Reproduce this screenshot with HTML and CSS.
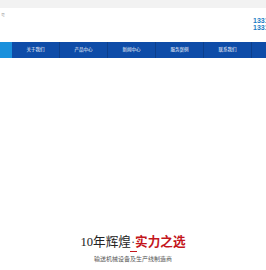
FILE: index.html
```html
<!DOCTYPE html>
<html lang="zh-CN">
<head>
    <meta charset="UTF-8">
    <meta name="viewport" content="width=device-width, initial-scale=1.0">
    <title>输送机械设备</title>
    <link rel="stylesheet" href="styles.css">
</head>
<body>
    <div class="topbar"></div>
    <div class="header">
        <div class="note">号</div>
        <div class="phone">
            <div>13312345678</div>
            <div>13312345678</div>
        </div>
    </div>
    <div class="nav">
        <div class="nav-left"></div>
        <a class="nav-item">关于我们</a>
        <a class="nav-item">产品中心</a>
        <a class="nav-item">新闻中心</a>
        <a class="nav-item">服务案例</a>
        <a class="nav-item">联系我们</a>
    </div>
    <div class="banner"></div>
    <div class="intro">
        <h2 class="title"><span class="num">10</span>年辉煌<span class="dot">·</span><span class="red">实力之选</span></h2>
        <div class="line"></div>
        <p class="sub">输送机械设备及生产线制造商</p>
    </div>
</body>
</html>
```

FILE: styles.css
```css
body {
    margin: 0;
    font-family: "Liberation Sans", "Noto Sans CJK SC", sans-serif;
    background-color: #fff;
    overflow: hidden;
}
.topbar {
    height: 8px;
    background-color: #f2f2f2;
}
.header {
    height: 34px;
    display: flex;
    justify-content: space-between;
}
.note {
    font-size: 4px;
    color: #999;
    padding: 4px 0 0 1px;
}
.phone {
    width: 13px;
    flex-shrink: 0;
    white-space: nowrap;
    overflow: hidden;
    padding-top: 9px;
    font-size: 7px;
    line-height: 7px;
    font-weight: bold;
    color: #1a7cc4;
}
.nav {
    display: flex;
    height: 16px;
    background-color: #0e4ca8;
}
.nav-left {
    width: 12px;
    background-color: #1a90dc;
}
.nav-item {
    width: 47px;
    border-right: 1px solid #0b3f8c;
    color: #fff;
    font-size: 4.5px;
    line-height: 16px;
    text-align: center;
}
.banner {
    height: 177px;
}
.intro {
    text-align: center;
}
.title {
    margin: 0;
    font-size: 12.6px;
    line-height: 14px;
    font-weight: normal;
    color: #222;
    font-family: "Liberation Serif", "Noto Sans CJK SC", serif;
}
.dot {
    color: #444;
}
.red {
    color: #c4161c;
    font-weight: bold;
}
.line {
    width: 7px;
    height: 1px;
    margin: 2px auto 0;
    background-color: #c4161c;
}
.sub {
    margin: 4px 0 0;
    font-size: 6px;
    line-height: 7px;
    color: #555;
}
```
